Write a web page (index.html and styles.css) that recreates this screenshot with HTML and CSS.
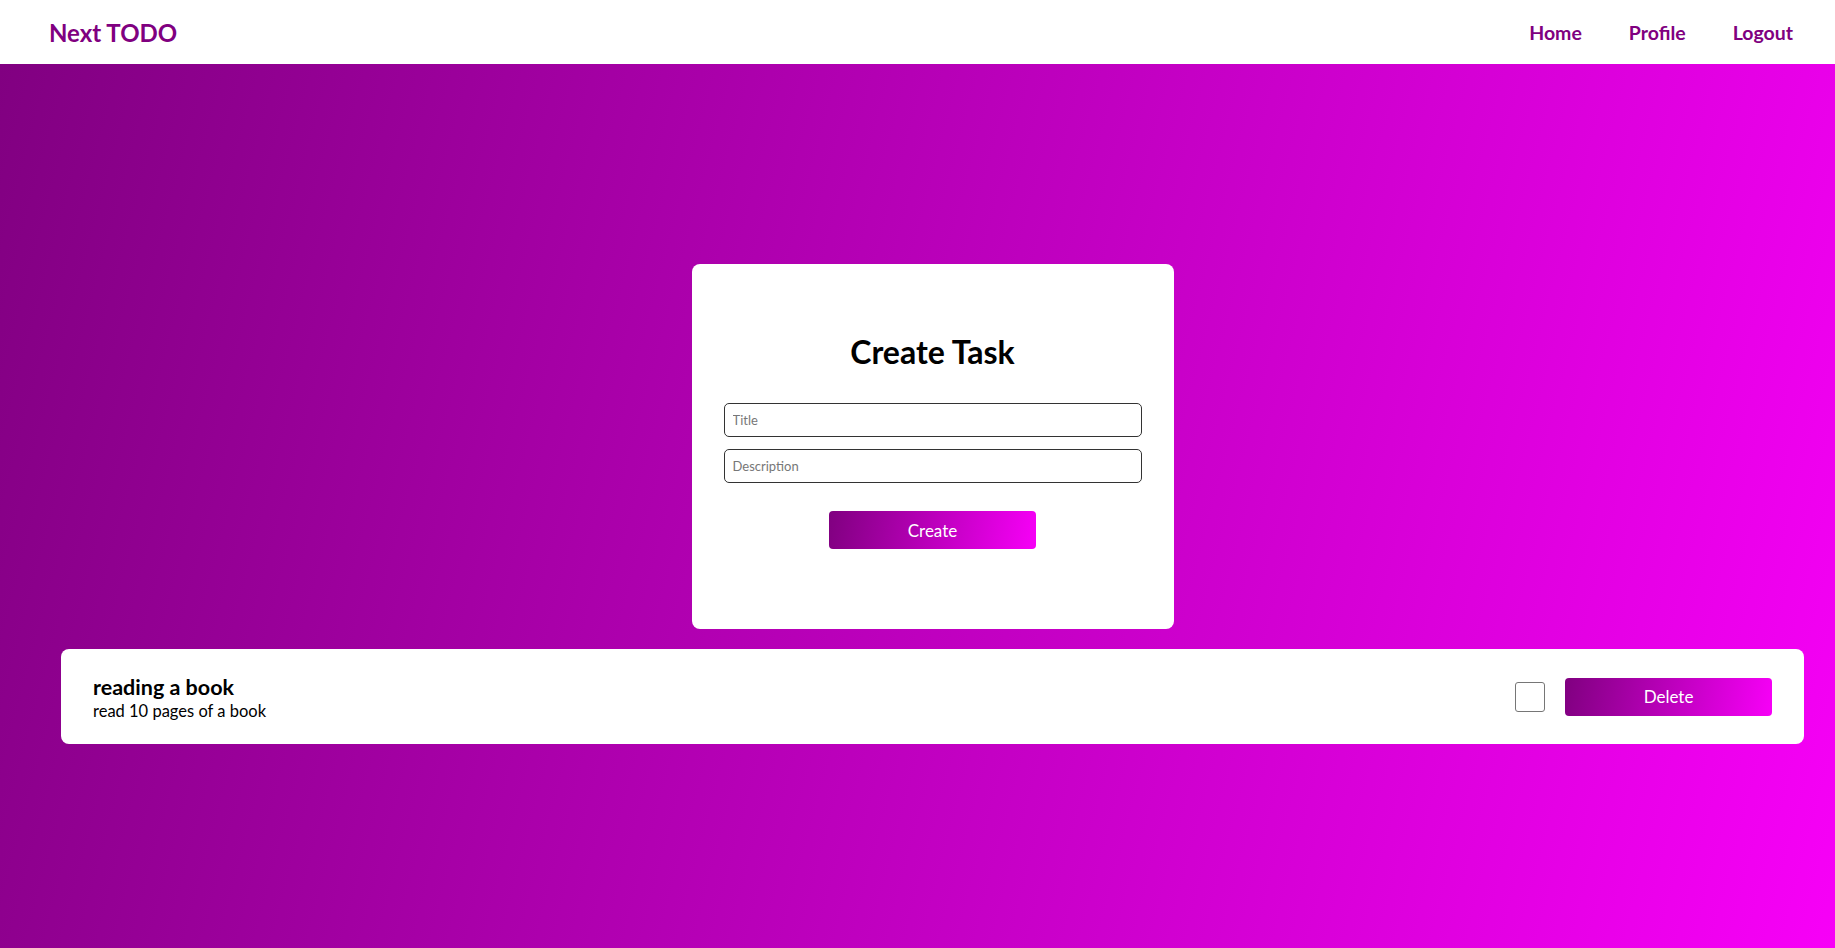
FILE: index.html
```html
<!DOCTYPE html>
<html lang="en">
<head>
<meta charset="utf-8">
<title>Next TODO</title>
<link rel="stylesheet" href="styles.css">
</head>
<body>
<header class="topbar">
  <a class="brand" href="#">Next TODO</a>
  <nav class="nav">
    <a href="#">Home</a>
    <a href="#">Profile</a>
    <a href="#">Logout</a>
  </nav>
</header>
<main class="main">
  <section class="create-card">
    <h1 class="create-title">Create Task</h1>
    <form class="create-form">
      <input class="field" type="text" placeholder="Title">
      <input class="field" type="text" placeholder="Description">
      <button class="grad-btn create-btn" type="button">Create</button>
    </form>
  </section>
  <ul class="task-list">
    <li class="task">
      <div class="task-text">
        <div class="task-title">reading a book</div>
        <div class="task-desc">read 10 pages of a book</div>
      </div>
      <div class="task-actions">
        <input class="check" type="checkbox">
        <button class="grad-btn delete-btn" type="button">Delete</button>
      </div>
    </li>
  </ul>
</main>
</body>
</html>
```
FILE: styles.css
```css
* { box-sizing: border-box; }
html, body { margin: 0; padding: 0; height: 100%; }
body {
  font-family: Lato, "Noto Sans", sans-serif;
  background: linear-gradient(105deg, #800080 0%, #f700f7 100%);
  min-height: 948px;
  display: flex;
  flex-direction: column;
}
.topbar {
  height: 64px;
  background: #fff;
  display: flex;
  align-items: center;
  justify-content: space-between;
  padding: 0 42px 0 49px;
}
.brand {
  color: #800080;
  font-weight: 700;
  font-size: 24px;
  text-decoration: none;
}
.nav { display: flex; gap: 47px; }
.nav a {
  color: #800080;
  font-weight: 700;
  font-size: 19.5px;
  text-decoration: none;
}
.main {
  flex: 1;
  padding: 200px 31px 0 61px;
  display: flex;
  flex-direction: column;
  align-items: center;
}
.create-card {
  width: 482px;
  height: 365px;
  background: #fff;
  border-radius: 8px;
  padding: 66px 32px 0;
}
.create-title {
  margin: 0 0 29px;
  text-align: center;
  font-size: 32px;
  font-weight: 700;
  color: #000;
  line-height: 44px;
}
.create-form {
  display: flex;
  flex-direction: column;
  align-items: center;
  gap: 12px;
}
.field {
  width: 100%;
  height: 34px;
  border: 1px solid #333;
  border-radius: 5px;
  padding: 0 8px;
  font-family: inherit;
  font-size: 13px;
  color: #222;
  background: #fff;
}
.field::placeholder { color: #777; }
.grad-btn {
  width: 207px;
  height: 38px;
  border: none;
  border-radius: 4px;
  background: linear-gradient(100deg, #800080 0%, #f700f7 100%);
  color: #fff;
  font-family: inherit;
  font-size: 17px;
  cursor: pointer;
}
.create-btn { margin-top: 16px; }
.task-list {
  list-style: none;
  margin: 20px 0 0;
  padding: 0;
  width: 100%;
}
.task {
  height: 95px;
  background: #fff;
  border-radius: 8px;
  display: flex;
  align-items: center;
  justify-content: space-between;
  padding: 0 32px;
}
.task-text { color: #000; padding-top: 3px; }
.task-title { font-size: 21.5px; font-weight: 700; line-height: 25px; }
.task-desc { font-size: 16.5px; line-height: 22px; }
.task-actions { display: flex; align-items: center; gap: 20px; }
.check {
  appearance: none;
  -webkit-appearance: none;
  margin: 0;
  width: 30px;
  height: 30px;
  border: 1px solid #767676;
  border-radius: 3px;
  background: #fff;
}
```
